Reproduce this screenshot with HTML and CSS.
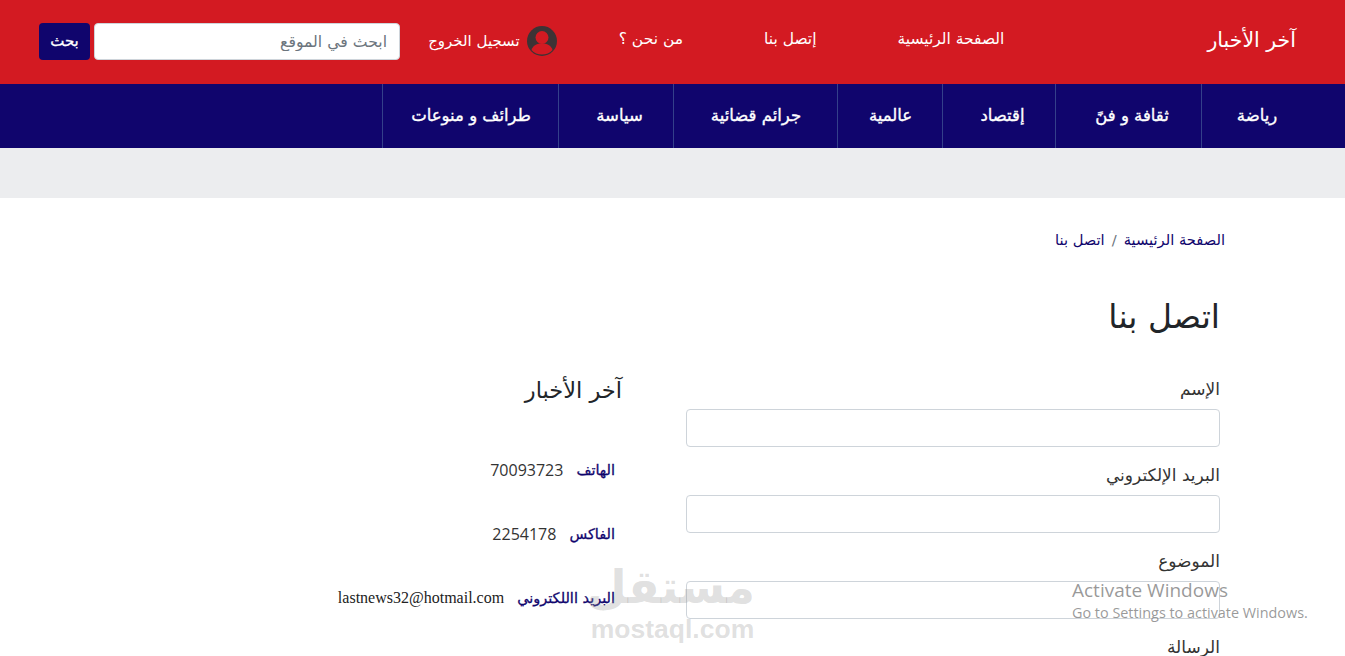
FILE: index.html

```html
<!DOCTYPE html>
<html lang="ar" dir="rtl">
<head>
  <meta charset="UTF-8">
  <meta name="viewport" content="width=device-width, initial-scale=1">
  <title>اتصل بنا</title>
  <link rel="stylesheet" href="styles.css">
</head>
<body>

  <header class="topbar">
    <a class="brand" href="#">آخر الأخبار</a>
    <nav class="toplinks">
      <a href="#">الصفحة الرئيسية</a>
      <a href="#">إتصل بنا</a>
      <a href="#">من نحن ؟</a>
    </nav>
    <a class="user" href="#">
      <svg class="user-icon" viewBox="0 0 30 30" width="30" height="30">
        <circle cx="15" cy="15" r="15" fill="#3d3335"/>
        <circle cx="15" cy="11.5" r="6.5" fill="#d31a22"/>
        <path d="M4.5 24 C6 19 10 17.5 15 17.5 C20 17.5 24 19 25.500 24 C23 27 19 28.500 15 28.500 C11 28.500 7 27 4.500 24Z" fill="#d31a22"/>
      </svg>
      <span>تسجيل الخروج</span>
    </a>
    <form class="search">
      <input type="text" placeholder="ابحث في الموقع">
      <button type="button">بحث</button>
    </form>
  </header>

  <nav class="sections">
    <a href="#">رياضة</a>
    <a href="#">ثقافة و فنً</a>
    <a href="#">إقتصاد</a>
    <a class="tight" href="#">عالمية</a>
    <a class="tight" href="#">جرائم قضائية</a>
    <a href="#">سياسة</a>
    <a class="tight" href="#">طرائف و منوعات</a>
  </nav>

  <div class="strip"></div>

  <main class="container">
    <div class="crumbs">
      <a href="#">الصفحة الرئيسية</a>
      <span class="sep">/</span>
      <a href="#">اتصل بنا</a>
    </div>

    <h1>اتصل بنا</h1>

    <div class="columns">
      <form class="contact-form">
        <label for="f_name">الإسم</label>
        <input type="text" id="f_name">
        <label for="f_mail">البريد الإلكتروني</label>
        <input type="text" id="f_mail">
        <label for="f_subject">الموضوع</label>
        <input type="text" id="f_subject">
        <label for="f_msg">الرسالة</label>
        <textarea id="f_msg" rows="4"></textarea>
      </form>

      <div class="info">
        <h2>آخر الأخبار</h2>
        <p class="info-row"><strong>الهاتف</strong><span>70093723</span></p>
        <p class="info-row"><strong>الفاكس</strong><span>2254178</span></p>
        <p class="info-row"><strong>البريد االلكتروني</strong><span class="mail">lastnews32@hotmail.com</span></p>
      </div>
    </div>
  </main>

  <div class="watermark">
    <div class="wm-ar">مستقل</div>
    <div class="wm-en">mostaql.com</div>
  </div>

  <div class="activate" dir="ltr">
    <div class="activate-title">Activate Windows</div>
    <div class="activate-sub">Go to Settings to activate Windows.</div>
  </div>

</body>
</html>
```

FILE: styles.css

```css
html, body {
  height: 656px;
  overflow: hidden;
}

body {
  margin: 0;
  background-color: white;
  color: #212529;
  font-family: "DejaVu Sans", "Open Sans", sans-serif;
  font-size: 16px;
}

a {
  color: inherit;
  text-decoration: none;
  white-space: nowrap;
}

.topbar {
  height: 84px;
  box-sizing: border-box;
  background-color: #d31a22;
  color: white;
  display: flex;
  align-items: center;
  padding: 0 49px 0 39px;
}

.brand {
  font-size: 20.5px;
  margin-left: 203px;
  margin-top: -4px;
}

.toplinks {
  display: flex;
  gap: 81px;
  font-size: 15.5px;
  margin-left: 62px;
  margin-top: -6px;
}

.user {
  display: flex;
  align-items: center;
  gap: 7px;
  font-size: 15px;
  margin-left: 28px;
  margin-top: -2px;
}

.user-icon {
  flex: none;
}

.search {
  display: flex;
  gap: 4px;
  margin-right: auto;
  margin-top: -2px;
}

.search input {
  width: 306px;
  height: 37px;
  box-sizing: border-box;
  border: 1px solid #ced4da;
  border-radius: 4px;
  padding: 0 12px;
  font: inherit;
  font-size: 15.7px;
}

.search input::placeholder {
  color: #6c757d;
}

.search button {
  width: 51px;
  height: 37px;
  background-color: #10056d;
  color: white;
  border: none;
  border-radius: 4px;
  font: inherit;
  font-size: 15px;
  -webkit-text-stroke: 0.3px white;
  padding: 0;
}

.sections {
  height: 64px;
  background-color: #10056d;
  color: white;
  display: grid;
  grid-template-columns: 104px 146px 113px 105px 164px 115px 176px;
  padding-right: 40px;
}

.sections a {
  display: flex;
  align-items: center;
  justify-content: center;
  padding: 0 0 2px 7px;
  font-size: 16.5px;
  -webkit-text-stroke: 0.35px white;
  border-left: 1px solid #34408a;
}

.sections a.tight {
  padding-left: 1px;
}

.strip {
  height: 50px;
  background-color: #ecedef;
}

.container {
  padding: 31px 120px 0 125px;
}

.crumbs {
  display: flex;
  gap: 8px;
  font-size: 14.7px;
  color: #10056d;
  height: 20px;
  align-items: center;
}

.sep {
  color: #6c757d;
  margin: 0 -1px;
}

h1 {
  font-size: 33px;
  font-weight: normal;
  margin: 44px 5px 36px 0;
  line-height: 48px;
}

.columns {
  display: flex;
  padding-right: 5px;
}

.contact-form {
  width: 534px;
  flex: none;
}

.contact-form label {
  display: block;
  font-size: 17px;
  line-height: 24px;
  margin-bottom: 8px;
  color: #333;
}

.contact-form input,
.contact-form textarea {
  display: block;
  width: 100%;
  box-sizing: border-box;
  height: 38px;
  border: 1px solid #ced4da;
  border-radius: 4px;
  margin-bottom: 16px;
}

.contact-form textarea {
  height: 120px;
}

.info {
  margin-right: 64px;
  margin-top: -3px;
}

h2 {
  font-size: 22.5px;
  font-weight: normal;
  line-height: 33px;
  margin: 0 0 51px;
}

.info-row {
  display: flex;
  align-items: center;
  gap: 13px;
  margin: 0 7px 40px 0;
  height: 24px;
  font-size: 16px;
}

.info-row strong {
  color: #10056d;
  font-size: 14.5px;
  font-weight: normal;
  -webkit-text-stroke: 0.3px #10056d;
}

.info-row span {
  font-family: "Open Sans", sans-serif;
  color: #333;
}

.info-row .mail {
  font-family: "Liberation Serif", serif;
  font-size: 16px;
  color: #222;
}

.watermark {
  position: absolute;
  left: 590px;
  top: 558px;
  width: 165px;
  text-align: center;
  color: rgba(150, 150, 150, 0.3);
  font-weight: bold;
}

.wm-ar {
  font-size: 46px;
  line-height: 58px;
}

.wm-en {
  font-family: "Liberation Sans", sans-serif;
  font-size: 26.5px;
  line-height: 26px;
}

.activate {
  position: absolute;
  left: 1072px;
  top: 578px;
  color: rgba(120, 120, 120, 0.75);
  font-family: "Open Sans", sans-serif;
}

.activate-title {
  font-size: 19px;
  line-height: 24px;
}

.activate-sub {
  font-size: 14.4px;
  line-height: 22px;
}
```
